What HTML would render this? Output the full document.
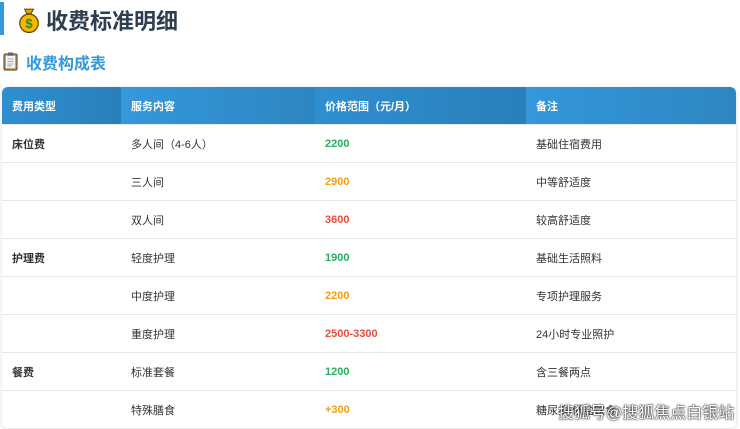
<!DOCTYPE html><html><head><meta charset="utf-8"><style>
body{margin:0;width:740px;height:429px;overflow:hidden;background:#fff;font-family:"Liberation Sans","Noto Sans CJK SC",sans-serif;}
.h1{position:absolute;left:0;top:2px;height:33px;border-left:4px solid #3498db;}
.h1 span{position:absolute;left:42px;top:2px;font-size:22px;font-weight:bold;color:#2c3e50;white-space:nowrap}
.coin{position:absolute;left:13px;top:5px;width:24px;height:26px}
.h2{position:absolute;left:26px;top:50px;font-size:16px;font-weight:bold;color:#3498db}
.clip{position:absolute;left:3px;top:52px;width:15px;height:19px}
table{position:absolute;left:2px;top:87px;width:734px;border-collapse:collapse;font-size:11px;color:#333;box-shadow:0 1px 4px rgba(0,0,0,.15);border-radius:6px;overflow:hidden}
th{background:linear-gradient(90deg,#3498db,#2e86c1);color:#fff;text-align:left;height:37px;padding:0 0 0 10px;font-weight:bold}
th.d{background:linear-gradient(90deg,#2f8fd0,#2a7fba)}
td{height:37px;padding:0 0 0 10px;border-top:1px solid #e6e6e6}
.g{color:#27ae60;font-weight:bold}.o{color:#f39c12;font-weight:bold}.r{color:#e74c3c;font-weight:bold}
b{font-weight:bold}
.wm{position:absolute;left:558px;top:399px;font-size:16px;color:#fff;text-shadow:0 0 2px #000,0 0 1px #000;white-space:nowrap}
</style></head><body>
<div class="h1"><svg class="coin" viewBox="0 0 22 24"><path d="M7 2h8l-2 4h-4z" fill="#e0a800" stroke="#6b4a00"/><circle cx="11" cy="15" r="8.5" fill="#f5b800" stroke="#6b4a00" stroke-width="1.2"/><text x="11" y="19.5" text-anchor="middle" font-size="12" font-weight="bold" fill="#2a8a2a" font-family="Liberation Sans">$</text></svg><span>收费标准明细</span></div>
<svg class="clip" viewBox="0 0 15 19"><rect x="1" y="2" width="13" height="16" rx="1.5" fill="#c9a46a" stroke="#4a3a2a"/><rect x="3" y="4" width="9" height="12" fill="#f4f4f4"/><rect x="5" y="0.5" width="5" height="3" fill="#666"/><path d="M4.5 7h6M4.5 9.5h6M4.5 12h6M4.5 14h4" stroke="#888" stroke-width="0.8"/></svg>
<div class="h2">收费构成表</div>
<table>
<tr><th class="d" style="width:109px">费用类型</th><th style="width:184px">服务内容</th><th class="d" style="width:201px">价格范围（元/月）</th><th>备注</th></tr>
<tr><td><b>床位费</b></td><td>多人间（4-6人）</td><td class="g">2200</td><td>基础住宿费用</td></tr>
<tr><td></td><td>三人间</td><td class="o">2900</td><td>中等舒适度</td></tr>
<tr><td></td><td>双人间</td><td class="r">3600</td><td>较高舒适度</td></tr>
<tr><td><b>护理费</b></td><td>轻度护理</td><td class="g">1900</td><td>基础生活照料</td></tr>
<tr><td></td><td>中度护理</td><td class="o">2200</td><td>专项护理服务</td></tr>
<tr><td></td><td>重度护理</td><td class="r">2500-3300</td><td>24小时专业照护</td></tr>
<tr><td><b>餐费</b></td><td>标准套餐</td><td class="g">1200</td><td>含三餐两点</td></tr>
<tr><td></td><td>特殊膳食</td><td class="o">+300</td><td>糖尿病/低盐饮食</td></tr>
</table>
<div class="wm">搜狐号@搜狐焦点白银站</div>
</body></html>
